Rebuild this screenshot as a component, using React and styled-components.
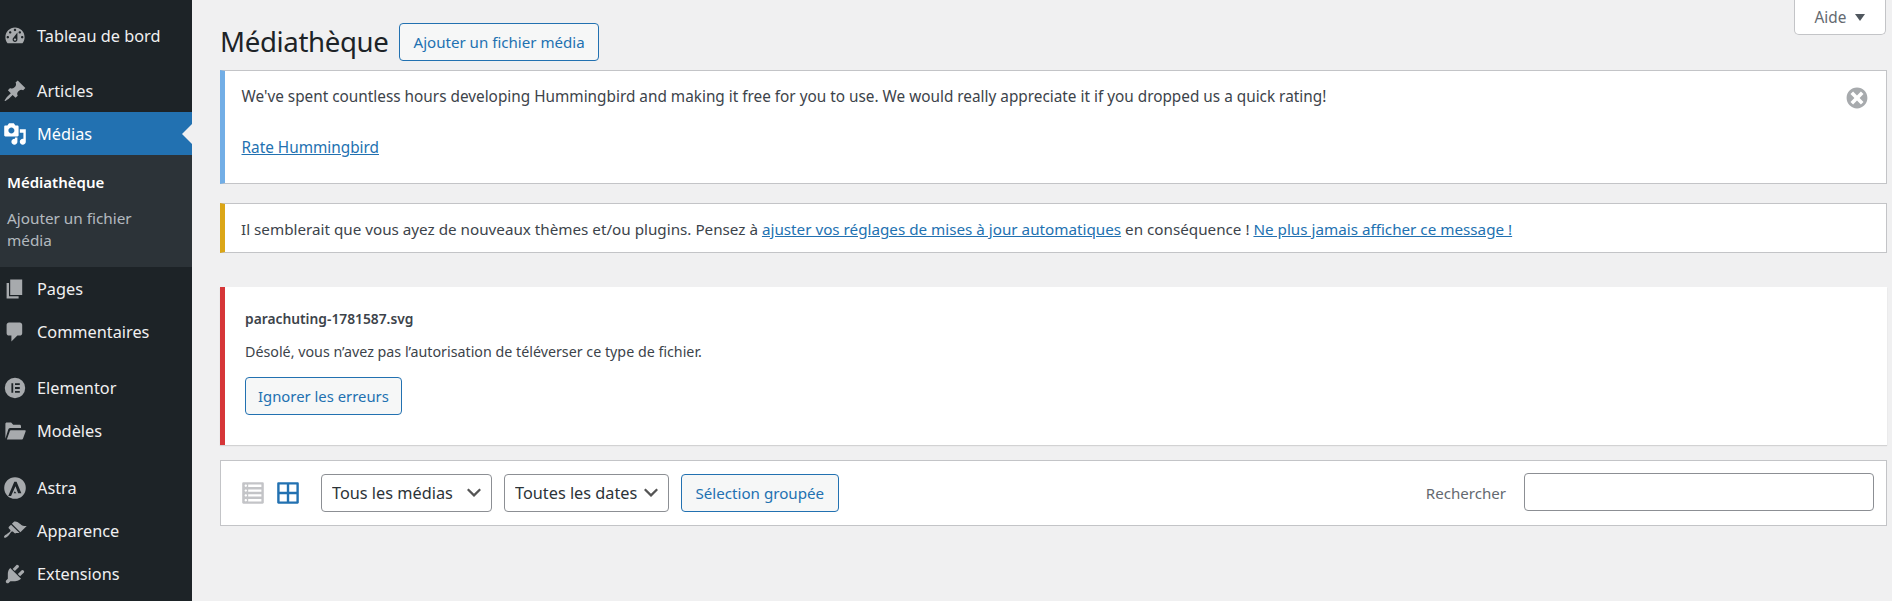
import React from 'react';
import styled, { createGlobalStyle } from 'styled-components';

const GlobalStyle = createGlobalStyle`
  html, body { margin: 0; padding: 0; height: 100%; overflow: hidden; background: #f0f0f1; }
  body {
    font-family: "Noto Sans", "Open Sans", sans-serif;
    font-size: 15.35px;
    color: #3c434a;
  }
  #root { height: 100%; }
`;

const Page = styled.div`
  display: flex;
  height: 601px;
  overflow: hidden;
`;

const Sidebar = styled.nav`
  width: 192px;
  flex: none;
  background: #1d2327;
  padding-top: 14px;
`;

const MenuRow = styled.a`
  position: relative;
  display: flex;
  align-items: center;
  height: 43px;
  margin-top: ${(p) => p.$gap || 0}px;
  color: ${(p) => (p.$active ? '#fff' : '#f0f0f1')};
  background: ${(p) => (p.$active ? '#2271b1' : 'transparent')};
  font-size: 16.3px;
  &::after {
    content: '';
    display: ${(p) => (p.$active ? 'block' : 'none')};
    position: absolute;
    right: 0;
    top: 50%;
    margin-top: -10px;
    border: 10px solid transparent;
    border-right-color: #f0f0f1;
    border-left-width: 0;
  }
`;

const MenuIcon = styled.span`
  width: 37px;
  flex: none;
  display: flex;
  justify-content: center;
  padding-right: 8px;
  box-sizing: border-box;
  color: ${(p) => (p.$active ? '#fff' : '#a7aaad')};
  svg { display: block; fill: currentColor; }
`;

const SubMenu = styled.div`
  height: 112px;
  box-sizing: border-box;
  background: #2c3338;
  padding: 16px 7px 0;
`;

const SubItem = styled.a`
  display: block;
  width: 150px;
  font-size: ${(p) => (p.$current ? 15 : 15.3)}px;
  line-height: ${(p) => (p.$current ? 23 : 22)}px;
  margin-bottom: ${(p) => (p.$current ? 13 : 0)}px;
  color: ${(p) => (p.$current ? '#fff' : 'rgba(240, 246, 252, 0.7)')};
  font-weight: ${(p) => (p.$current ? 600 : 400)};
`;

const Content = styled.main`
  flex: 1;
  min-width: 0;
  padding: 0 5px 0 28px;
`;

const TitleRow = styled.div`
  display: flex;
  align-items: flex-start;
  height: 70px;
`;

const Title = styled.h1`
  margin: 22px 0 0;
  font-size: 27.6px;
  line-height: 38px;
  font-weight: 400;
  letter-spacing: -0.35px;
  color: #1d2327;
`;

const Button = styled.button`
  height: 38px;
  box-sizing: border-box;
  padding: 0 ${(p) => p.$pad || 13}px;
  border: 1px solid #2271b1;
  border-radius: 4px;
  background: #f6f7f7;
  color: #2271b1;
  font-family: inherit;
  font-size: ${(p) => p.$size || 15.1}px;
  white-space: nowrap;
`;

const AddButton = styled(Button)`
  margin: 23px 0 0 11px;
`;

const HelpTab = styled.div`
  margin-left: auto;
  margin-right: 1px;
  width: 92px;
  height: 35px;
  box-sizing: border-box;
  display: flex;
  align-items: center;
  justify-content: center;
  gap: 9px;
  background: #fff;
  border: 1px solid #c3c4c7;
  border-top: 0;
  border-radius: 0 0 5px 5px;
  color: #646970;
`;

const Caret = styled.span`
  width: 0;
  height: 0;
  border: 5px solid transparent;
  border-top: 7px solid #50575e;
  border-bottom: 0;
`;

const Notice = styled.div`
  position: relative;
  box-sizing: border-box;
  height: ${(p) => p.$height}px;
  margin-bottom: ${(p) => p.$below}px;
  padding: ${(p) => p.$pad};
  background: #fff;
  border: 1px solid #c3c4c7;
  border-left: 5px solid ${(p) => p.$accent};
`;

const NoticeText = styled.p`
  margin: 0 0 ${(p) => p.$below || 0}px;
  font-size: ${(p) => p.$size || 15.33}px;
  line-height: 22px;
`;

const Link = styled.a`
  color: #2271b1;
  text-decoration: underline;
`;

const Dismiss = styled.span`
  position: absolute;
  top: 14px;
  right: 16px;
  color: #a7aaad;
  svg { display: block; fill: currentColor; }
`;

const UploadError = styled.div`
  box-sizing: border-box;
  height: 158px;
  margin-bottom: 15px;
  padding: 22px 20px;
  background: #fff;
  border-left: 5px solid #d63638;
  box-shadow: 0 1px 1px rgba(0, 0, 0, 0.12);
`;

const FileName = styled.div`
  font-size: 13.8px;
  line-height: 20px;
  font-weight: 600;
  margin-bottom: 13px;
`;

const ErrorText = styled.div`
  font-size: 14.27px;
  line-height: 20px;
  margin-bottom: 15px;
`;

const Toolbar = styled.div`
  box-sizing: border-box;
  height: 66px;
  display: flex;
  align-items: center;
  padding: 0 12px 0 20px;
  background: #fff;
  border: 1px solid #c3c4c7;
`;

const ViewIcon = styled.svg`
  display: block;
  width: 24px;
  height: 24px;
  fill: ${(p) => (p.$active ? '#2271b1' : '#c3c4c7')};
  margin-right: ${(p) => p.$right}px;
`;

const Select = styled.select`
  appearance: none;
  box-sizing: border-box;
  width: ${(p) => p.$width}px;
  height: 38px;
  margin-right: ${(p) => p.$right}px;
  padding: 0 0 0 10px;
  border: 1px solid #8c8f94;
  border-radius: 4px;
  background: #fff url("data:image/svg+xml,%3Csvg xmlns='http://www.w3.org/2000/svg' width='20' height='20' viewBox='0 0 20 20'%3E%3Cpath d='M3 7l7 7 7-7-1.6-1.6L10 10.8 4.6 5.4z' fill='%23555'/%3E%3C/svg%3E") no-repeat right 7px top 50%;
  color: #2c3338;
  font-family: inherit;
  font-size: 16.3px;
`;

const SearchLabel = styled.label`
  margin-left: auto;
  margin-right: 18px;
  color: #646970;
  font-size: 15.1px;
`;

const SearchInput = styled.input`
  box-sizing: border-box;
  width: 350px;
  height: 38px;
  margin-bottom: 2px;
  border: 1px solid #8c8f94;
  border-radius: 4px;
  background: #fff;
`;

const Glyph = ({ d, size = 24, viewBox = '0 0 20 20' }) => (
  <svg width={size} height={size} viewBox={viewBox} aria-hidden="true">
    <path fillRule="evenodd" d={d} />
  </svg>
);

const icons = {
  dashboard:
    'M3.76 16h12.48c1.1-1.37 1.76-3.11 1.76-5 0-4.42-3.58-8-8-8s-8 3.58-8 8c0 1.89.66 3.63 1.76 5zM10 4c.55 0 1 .45 1 1s-.45 1-1 1-1-.45-1-1 .45-1 1-1zM6 6c.55 0 1 .45 1 1s-.45 1-1 1-1-.45-1-1 .45-1 1-1zm8 0c.55 0 1 .45 1 1s-.45 1-1 1-1-.45-1-1 .45-1 1-1zm-5.37 5.55L12 7v6c0 1.1-.9 2-2 2s-2-.9-2-2c0-.57.24-1.08.63-1.45zM4 10c.55 0 1 .45 1 1s-.45 1-1 1-1-.45-1-1 .45-1 1-1zm12 0c.55 0 1 .45 1 1s-.45 1-1 1-1-.45-1-1 .45-1 1-1zm-5 3c0-.55-.45-1-1-1s-1 .45-1 1 .45 1 1 1 1-.45 1-1z',
  post:
    'M10.44 3.02l1.82-1.82 6.36 6.35-1.83 1.82c-1.05-.68-2.48-.57-3.41.36l-.75.75c-.92.93-1.04 2.35-.35 3.41l-1.83 1.82-2.41-2.41-2.8 2.79c-.42.42-3.38 2.71-3.8 2.29s1.86-3.39 2.28-3.81l2.79-2.79L4.1 9.36l1.83-1.82c1.05.69 2.48.57 3.4-.36l.75-.75c.93-.92 1.05-2.35.36-3.41z',
  media:
    'M13 11V4c0-.55-.45-1-1-1h-1.67L9 1H5L3.67 3H2c-.55 0-1 .45-1 1v7c0 .55.45 1 1 1h10c.55 0 1-.45 1-1zM7 4.5c1.38 0 2.5 1.12 2.5 2.5S8.38 9.5 7 9.5 4.5 8.38 4.5 7 5.62 4.5 7 4.5zM14 6h5v10.5c0 1.38-1.12 2.5-2.5 2.5S14 17.88 14 16.5s1.12-2.5 2.5-2.5c.17 0 .34.02.5.05V9h-3V6zm-4 8.05V13h2v3.5c0 1.38-1.12 2.5-2.5 2.5S7 17.88 7 16.5 8.12 14 9.5 14c.17 0 .34.02.5.05z',
  page: 'M6 15V2h10v13H6zm-1 1h8v2H3V5h2v11z',
  comments:
    'M5 2h9c1.1 0 2 .9 2 2v7c0 1.1-.9 2-2 2h-2l-5 5v-5H5c-1.1 0-2-.9-2-2V4c0-1.1.9-2 2-2z',
  elementor:
    'M10 1.5a8.5 8.5 0 1 0 0 17 8.5 8.5 0 0 0 0-17zM7 6h1.5v8H7V6zm3 0h4v1.6h-4V6zm0 3.2h4v1.6h-4V9.2zm0 3.2h4V14h-4v-1.6z',
  folder:
    'M2 16.5V4.2C2 3.5 2.5 3 3.2 3h3.6l1.7 1.7h5.3c.7 0 1.2.5 1.2 1.2V7.5H6.2c-.8 0-1.5.5-1.8 1.2L2 16.5zm1.2.5l2.6-7.2c.1-.3.4-.5.7-.5h11.8c.5 0 .8.5.6 1l-2.2 5.9c-.1.5-.5.8-1 .8H3.2z',
  astra:
    'M10 1a9 9 0 1 0 0 18 9 9 0 0 0 0-18zM9.4 4.7h1.9l4 9.6h-2.7l-2.2-5.7-3.7 8H4.4l5-11.9zm.4 8.1l1.4 1.5H8.9l.9-1.5z',
  appearance:
    'M14.48 11.06L7.41 3.99l1.5-1.5c.5-.56 2.3-.47 3.51.32 1.21.8 1.43 1.28 2.91 2.1 1.18.64 2.45 1.26 4.45.85zm-.71.71L6.7 4.7 4.93 6.47c-.39.39-.39 1.02 0 1.41l1.06 1.06c.39.39.39 1.03 0 1.42-.6.6-1.43 1.11-2.21 1.69-.35.26-.7.53-1.01.84C1.43 13.23.4 14.85 1.02 15.5c.54.57 2.23-.42 3.44-1.63.31-.31.58-.66.84-1.01.58-.78 1.09-1.61 1.69-2.21.39-.39 1.02-.39 1.41 0l1.06 1.06c.39.39 1.02.39 1.41 0z',
  plugins:
    'M13.11 4.36L9.87 7.6 8 5.73l3.24-3.24c.35-.34 1.05-.2 1.56.32.52.51.66 1.21.31 1.55zm-8 1.77l.91-1.12 9.01 9.01-1.19.84c-.71.71-2.63 1.16-3.82 1.16H6.14L4.9 17.26c-.59.59-1.54.59-2.12 0-.59-.58-.59-1.53 0-2.12l1.24-1.24v-3.88c0-1.13.4-3.19 1.09-3.89zm7.26 3.97l3.24-3.24c.34-.35 1.04-.21 1.55.31.52.51.66 1.21.31 1.55l-3.24 3.25z',
  dismiss:
    'M10 2c4.42 0 8 3.58 8 8s-3.58 8-8 8-8-3.58-8-8 3.58-8 8-8zm5 11l-3-3 3-3-2-2-3 3-3-3-2 2 3 3-3 3 2 2 3-3 3 3z',
  list:
    'M2 19h16c.55 0 1-.45 1-1V2c0-.55-.45-1-1-1H2c-.55 0-1 .45-1 1v16c0 .55.45 1 1 1zM4 3c.55 0 1 .45 1 1s-.45 1-1 1-1-.45-1-1 .45-1 1-1zm13 0v2H6V3h11zM4 7c.55 0 1 .45 1 1s-.45 1-1 1-1-.45-1-1 .45-1 1-1zm13 0v2H6V7h11zM4 11c.55 0 1 .45 1 1s-.45 1-1 1-1-.45-1-1 .45-1 1-1zm13 0v2H6v-2h11zM4 15c.55 0 1 .45 1 1s-.45 1-1 1-1-.45-1-1 .45-1 1-1zm13 0v2H6v-2h11z',
  grid:
    'M2 1h16c.55 0 1 .45 1 1v16c0 .55-.45 1-1 1H2c-.55 0-1-.45-1-1V2c0-.55.45-1 1-1zm7.01 7.99v-6H3v6h6.01zm8 0v-6h-6v6h6zm-8 8.01v-6H3v6h6.01zm8 0v-6h-6v6h6z',
};

const menuBefore = [
  { label: 'Tableau de bord', icon: 'dashboard' },
  { label: 'Articles', icon: 'post', gap: 12 },
  { label: 'Médias', icon: 'media', active: true },
];

const menuAfter = [
  { label: 'Pages', icon: 'page' },
  { label: 'Commentaires', icon: 'comments' },
  { label: 'Elementor', icon: 'elementor', gap: 13 },
  { label: 'Modèles', icon: 'folder' },
  { label: 'Astra', icon: 'astra', gap: 14 },
  { label: 'Apparence', icon: 'appearance' },
  { label: 'Extensions', icon: 'plugins' },
];

const Item = ({ item }) => (
  <MenuRow $gap={item.gap} $active={item.active}>
    <MenuIcon $active={item.active}>
      <Glyph d={icons[item.icon]} />
    </MenuIcon>
    {item.label}
  </MenuRow>
);

const App = () => {
  return (
    <Page>
      <GlobalStyle />
      <Sidebar>
        {menuBefore.map((item) => (
          <Item key={item.label} item={item} />
        ))}
        <SubMenu>
          <SubItem $current>Médiathèque</SubItem>
          <SubItem>Ajouter un fichier média</SubItem>
        </SubMenu>
        {menuAfter.map((item) => (
          <Item key={item.label} item={item} />
        ))}
      </Sidebar>
      <Content>
        <TitleRow>
          <Title>Médiathèque</Title>
          <AddButton>Ajouter un fichier média</AddButton>
          <HelpTab>
            Aide <Caret />
          </HelpTab>
        </TitleRow>
        <Notice $accent="#72aee6" $height={114} $below={19} $pad="14px 16.5px">
          <NoticeText $below={29}>
            We've spent countless hours developing Hummingbird and making it free for you to use. We would really appreciate it if you dropped us a quick rating!
          </NoticeText>
          <NoticeText>
            <Link>Rate Hummingbird</Link>
          </NoticeText>
          <Dismiss>
            <Glyph d={icons.dismiss} size={26} />
          </Dismiss>
        </Notice>
        <Notice $accent="#dba617" $height={50} $below={34} $pad="14px 16px">
          <NoticeText $size={15.23}>
            Il semblerait que vous ayez de nouveaux thèmes et/ou plugins. Pensez à <Link>ajuster vos réglages de mises à jour automatiques</Link> en conséquence ! <Link>Ne plus jamais afficher ce message !</Link>
          </NoticeText>
        </Notice>
        <UploadError>
          <FileName>parachuting-1781587.svg</FileName>
          <ErrorText>Désolé, vous n’avez pas l’autorisation de téléverser ce type de fichier.</ErrorText>
          <Button $size={14.85} $pad={12}>Ignorer les erreurs</Button>
        </UploadError>
        <Toolbar>
          <ViewIcon viewBox="0 0 20 20" $right={11}>
            <path fillRule="evenodd" d={icons.list} />
          </ViewIcon>
          <ViewIcon viewBox="0 0 20 20" $active $right={21}>
            <path fillRule="evenodd" d={icons.grid} />
          </ViewIcon>
          <Select $width={171} $right={12}>
            <option>Tous les médias</option>
          </Select>
          <Select $width={165} $right={12}>
            <option>Toutes les dates</option>
          </Select>
          <Button $size={15.15} $pad={13.5}>Sélection groupée</Button>
          <SearchLabel>Rechercher</SearchLabel>
          <SearchInput type="search" />
        </Toolbar>
      </Content>
    </Page>
  );
};

export default App;
